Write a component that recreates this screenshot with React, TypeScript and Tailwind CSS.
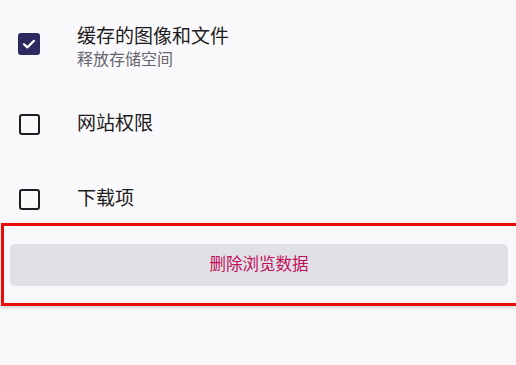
import React from "react";

const font = { fontFamily: '"Roboto", "Noto Sans CJK SC", sans-serif' };

const CheckedBox = () => (
  <div className="flex h-[22px] w-[22px] shrink-0 items-center justify-center rounded-[3px] bg-[#2c2a5e]">
    <svg width="16" height="16" viewBox="0 0 16 16" fill="none">
      <path
        d="M3 8.2 L6.4 11.4 L13 4.8"
        stroke="white"
        strokeWidth="2.2"
        strokeLinecap="round"
        strokeLinejoin="round"
      />
    </svg>
  </div>
);

const EmptyBox = () => (
  <div className="h-[21px] w-[21px] shrink-0 rounded-[3px] border-[2.5px] border-[#1e1d22]" />
);

export default function App() {
  return (
    <div className="h-[365px] w-full overflow-hidden bg-[#f9f9fb]" style={font}>
      <div className="flex items-start pl-[18px] pt-[24px]">
        <div className="mt-[9px]">
          <CheckedBox />
        </div>
        <div className="ml-[37px]">
          <div className="text-[19px] leading-[26px] text-[#1d1b20]">缓存的图像和文件</div>
          <div className="text-[16px] leading-[20px] text-[#66646c]">释放存储空间</div>
        </div>
      </div>

      <div className="mt-[41px] flex h-[26px] items-center pl-[19px]">
        <EmptyBox />
        <span className="ml-[37px] text-[19px] leading-[26px] text-[#1d1b20]">网站权限</span>
      </div>

      <div className="mt-[49px] flex h-[26px] items-center pl-[19px]">
        <EmptyBox />
        <span className="ml-[37px] text-[19px] leading-[26px] text-[#1d1b20]">下载项</span>
      </div>

      <div className="ml-px mt-[11px] border-b-[3px] border-l-[3px] border-t-[3px] border-[#ec0b0b] pb-[17px] pt-[18px] shadow-[0_2px_3px_rgba(0,0,0,0.15)]">
        <button className="ml-[6px] mr-[8px] flex h-[42px] w-[calc(100%-14px)] items-center justify-center rounded-[5px] bg-[#e1e0e6] text-[16.5px] text-[#c0105a]">
          删除浏览数据
        </button>
      </div>
    </div>
  );
}
